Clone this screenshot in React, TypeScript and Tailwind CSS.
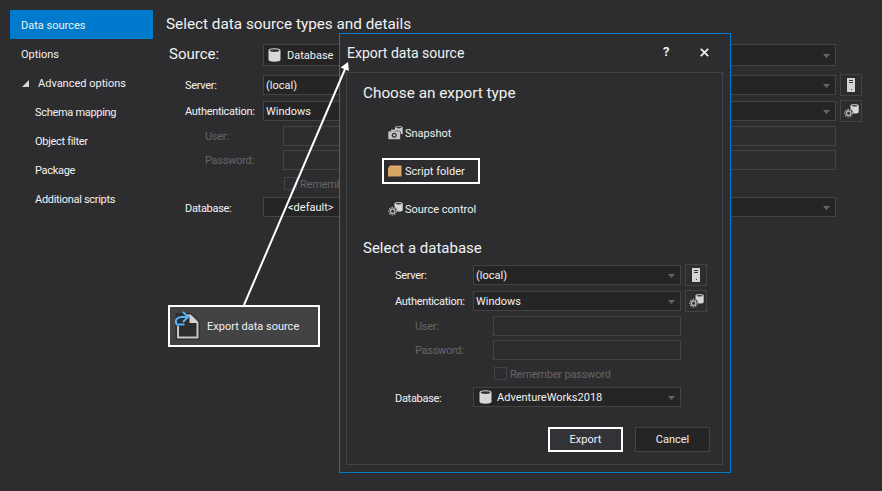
import React from "react";

const DbIcon = ({ className = "" }: { className?: string }) => (
  <svg width="13" height="14" viewBox="0 0 13 14" className={className}>
    <path d="M0.5 2.5C0.5 1 3 0.3 6.5 0.3S12.5 1 12.5 2.5V11.5C12.5 13 10 13.7 6.5 13.7S0.5 13 0.5 11.5Z" fill="#d8d8d8" />
    <ellipse cx="6.5" cy="2.6" rx="4.8" ry="1.4" fill="#333336" />
  </svg>
);

const ServerIcon = () => (
  <svg width="8" height="14" viewBox="0 0 8 14">
    <rect width="8" height="14" fill="#d4d4d4" />
    <rect x="2" y="2" width="4" height="1" fill="#333336" />
    <rect x="2" y="4" width="4" height="1" fill="#333336" />
    <rect x="4" y="11" width="1" height="1" fill="#333336" />
  </svg>
);

const DbGearIcon = () => (
  <svg width="15" height="14" viewBox="0 0 15 14">
    <path d="M6.5 1.6C6.5 .7 8 .2 10.6 .2S14.7 .7 14.7 1.6V8C14.7 9 13.2 9.6 10.6 9.6S6.5 9 6.5 8Z" fill="#d8d8d8" />
    <ellipse cx="10.6" cy="1.8" rx="3.1" ry=".8" fill="#333336" />
    <circle cx="4.6" cy="9.2" r="4.7" fill="#333336" />
    <circle cx="4.6" cy="9.2" r="2.2" fill="none" stroke="#b0b0b0" strokeWidth="1.4" />
    <circle cx="4.6" cy="9.2" r="3.8" fill="none" stroke="#b0b0b0" strokeWidth="1.2" strokeDasharray="1.5 1.2" />
  </svg>
);

const CameraIcon = () => (
  <svg width="15" height="14" viewBox="0 0 15 14">
    <path d="M7 1.5C7 .6 8.5 .2 10.8 .2S14.6 .6 14.6 1.5V8H7Z" fill="#d0d0d0" />
    <ellipse cx="10.8" cy="1.6" rx="2.9" ry=".8" fill="#333336" />
    <rect x="0" y="5" width="12.5" height="8.6" rx="1" fill="#c4c4c4" stroke="#2d2d30" strokeWidth=".6" />
    <rect x="3" y="3.6" width="4" height="2" fill="#c4c4c4" />
    <circle cx="6.2" cy="9.2" r="2.5" fill="#333336" />
    <circle cx="6.2" cy="9.2" r="1.2" fill="#c4c4c4" />
  </svg>
);

const FolderIcon = () => (
  <svg width="14" height="12" viewBox="0 0 14 12">
    <path d="M0 2.5H1V1.5L2 .5H13.5V11.5H0Z" fill="#d6a662" />
    <path d="M3 1H13V2H3Z" fill="#e0b475" />
  </svg>
);

const ExportIcon = () => (
  <svg width="28" height="30" viewBox="0 0 28 30">
    <path d="M2.5 2H18L27 11V29H2.5Z" fill="#2d2d30" />
    <path d="M5 15V26.5H24.5V11.5L17.5 4.5H14" fill="none" stroke="#c4c4c4" strokeWidth="2" />
    <path d="M16.5 3.5L25 12H16.5Z" fill="#d4d4d4" />
    <path d="M3.5 13C1.5 8.5 4.5 6 9 6H15" fill="none" stroke="#58b0f5" strokeWidth="2" />
    <path d="M10 1L15 6L10 11" fill="none" stroke="#58b0f5" strokeWidth="2" />
    <path d="M3 13.5H11.5" stroke="#58b0f5" strokeWidth="2" />
  </svg>
);

const Txt = ({ children }: { children: React.ReactNode }) => <span className="pt-[2px]">{children}</span>;

const Combo = ({ children }: { children: React.ReactNode }) => (
  <div className="flex-1 h-full flex items-center bg-[#252526] border border-[#434346] pl-[2px] pr-[5px] text-[#f1f1f1] min-w-0">
    <div className="flex-1 flex items-center min-w-0 whitespace-nowrap">{children}</div>
    <svg width="7" height="4" viewBox="0 0 7 4" className="shrink-0 mt-[1px]">
      <path d="M0 0H7L3.5 4Z" fill="#656568" />
    </svg>
  </div>
);

const SquareBtn = ({ children }: { children: React.ReactNode }) => (
  <button className="w-[22px] h-[22px] ml-[4px] flex items-center justify-center border border-[#434346] bg-[#2d2d30] shrink-0">
    {children}
  </button>
);

const Label = ({ children, muted = false }: { children: React.ReactNode; muted?: boolean }) => (
  <div className={`w-[78px] shrink-0 whitespace-nowrap pt-[1px] tracking-[-0.3px] ${muted ? "text-[#656565]" : "text-[#f1f1f1]"}`}>
    {children}
  </div>
);

const ComboRow = ({ label, value, icon }: { label: string; value: string; icon: React.ReactNode }) => (
  <div className="flex items-center h-[22px]">
    <Label>{label}</Label>
    <div className="flex-1 h-[20px] flex">
      <Combo><Txt>{value}</Txt></Combo>
    </div>
    <SquareBtn>{icon}</SquareBtn>
  </div>
);

const DisabledRow = ({ label }: { label: string }) => (
  <div className="flex items-center h-[20px] pl-[20px] pr-[26px]">
    <Label muted>{label}</Label>
    <div className="flex-1 h-full border border-[#434346]" />
  </div>
);

const Remember = () => (
  <div className="flex items-center h-[13px] pl-[99px] text-[#656565] whitespace-nowrap tracking-[-0.2px]">
    <span className="w-[13px] h-[13px] border border-[#434346] mr-[3px] shrink-0" />
    <Txt>Remember password</Txt>
  </div>
);

const Fields = ({ db }: { db: React.ReactNode }) => (
  <div className="flex flex-col">
    <ComboRow label="Server:" value="(local)" icon={<ServerIcon />} />
    <div className="mt-[4px]">
      <ComboRow label="Authentication:" value="Windows" icon={<DbGearIcon />} />
    </div>
    <div className="mt-[4px]"><DisabledRow label="User:" /></div>
    <div className="mt-[4px]"><DisabledRow label="Password:" /></div>
    <div className="mt-[7px]"><Remember /></div>
    <div className="mt-[7px] flex items-center h-[20px] pr-[26px]">
      <div className="w-[78px] shrink-0 pt-[3px] tracking-[-0.3px] text-[#f1f1f1]">Database:</div>
      <div className="flex-1 h-full flex">
        <Combo>{db}</Combo>
      </div>
    </div>
  </div>
);

const Nav = ({ children, active }: { children: React.ReactNode; active?: boolean }) => (
  <div className={`h-[29px] pl-[11px] pt-[2px] flex items-center text-[#f1f1f1] whitespace-nowrap ${active ? "bg-[#007acc]" : ""}`}>
    {children}
  </div>
);

const SubNav = ({ children }: { children: React.ReactNode }) => (
  <div className="h-[29px] pl-[25px] pt-[2px] flex items-center text-[#f1f1f1] whitespace-nowrap tracking-[-0.3px]">
    {children}
  </div>
);

const Option = ({ icon, label, selected }: { icon: React.ReactNode; label: string; selected?: boolean }) => (
  <div className={`w-[98px] h-[26px] flex items-center pl-[4px] border-2 whitespace-nowrap text-[#f1f1f1] ${selected ? "border-white" : "border-transparent"}`}>
    <span className="w-[17px] flex items-center shrink-0">{icon}</span>
    <Txt>{label}</Txt>
  </div>
);

export default function App() {
  return (
    <div className="relative w-[882px] h-[491px] overflow-hidden bg-[#2d2d30] text-[11px] leading-[16px] font-[family-name:Roboto,sans-serif] flex">
      <nav className="w-[153px] pl-[10px] pt-[10px] shrink-0">
        <Nav active>Data sources</Nav>
        <Nav>Options</Nav>
        <Nav>
          <svg width="7" height="7" viewBox="0 0 7 7" className="mr-[9px] ml-[1px]">
            <path d="M7 0V7H0Z" fill="#d8d8d8" />
          </svg>
          Advanced options
        </Nav>
        <SubNav>Schema mapping</SubNav>
        <SubNav>Object filter</SubNav>
        <SubNav>Package</SubNav>
        <SubNav>Additional scripts</SubNav>
      </nav>

      <main className="flex-1 pr-[20px] pt-[15px]">
        <h1 className="pl-[13px] h-[19px] text-[15.3px] leading-[19px] text-[#f1f1f1] font-normal whitespace-nowrap">
          Select data source types and details
        </h1>
        <div className="mt-[10px] flex items-center h-[22px] pl-[16px] pr-[26px]">
          <div className="w-[94px] shrink-0 pb-[2px] text-[15px] text-[#f1f1f1]">Source:</div>
          <div className="flex-1 h-full flex">
            <Combo>
              <DbIcon className="ml-[2px] mr-[6px]" />
              <Txt>Database</Txt>
            </Combo>
          </div>
        </div>
        <div className="mt-[8px] pl-[32px]">
          <Fields db={<span className="pl-[22px] pt-[2px]">&lt;default&gt;</span>} />
        </div>
      </main>

      <section className="absolute left-[339px] top-[33px] w-[392px] h-[440px] border border-[#007acc] bg-[#2d2d30] flex flex-col">
        <header className="h-[38px] shrink-0 flex items-center pl-[7px] text-[14px] text-[#f1f1f1] relative">
          Export data source
          <span className="absolute left-[323px] top-[10px] text-[13px] font-bold leading-[16px]">?</span>
          <svg width="9" height="9" viewBox="0 0 9 9" className="absolute left-[360px] top-[14px]">
            <path d="M.8 .8L8.2 8.2M8.2 .8L.8 8.2" stroke="#f1f1f1" strokeWidth="1.7" />
          </svg>
        </header>
        <div className="ml-[6px] mr-[7px] mb-[7px] flex-1 border border-[#434346] pl-[16px] pt-[9px]">
          <h2 className="h-[22px] text-[15.3px] leading-[22px] font-normal text-[#f1f1f1]">Choose an export type</h2>
          <div className="mt-[16px] ml-[19px] flex flex-col gap-[12px]">
            <Option icon={<CameraIcon />} label="Snapshot" />
            <Option icon={<FolderIcon />} label="Script folder" selected />
            <Option icon={<DbGearIcon />} label="Source control" />
          </div>
          <h2 className="mt-[15px] h-[22px] text-[15px] leading-[22px] font-normal text-[#f1f1f1]">Select a database</h2>
          <div className="mt-[5px] ml-[32px] w-[312px]">
            <Fields
              db={
                <>
                  <DbIcon className="ml-[3px] mr-[5px]" />
                  <Txt>AdventureWorks2018</Txt>
                </>
              }
            />
          </div>
          <div className="mt-[20px] ml-[185px] flex gap-[12px]">
            <button className="w-[75px] h-[25px] pt-[1px] border-2 border-white bg-[#333337] text-[#f1f1f1]">Export</button>
            <button className="w-[75px] h-[25px] pt-[1px] border border-[#434346] bg-[#252526] text-[#f1f1f1]">Cancel</button>
          </div>
        </div>
      </section>

      <div className="absolute left-[168px] top-[305px] w-[152px] h-[42px] border-2 border-white bg-[#434346] flex items-center pl-[3px] text-[#f1f1f1] whitespace-nowrap">
        <span className="w-[34px] shrink-0 flex items-center"><ExportIcon /></span>
        <Txt>Export data source</Txt>
      </div>

      <svg width="882" height="491" viewBox="0 0 882 491" className="absolute left-0 top-0 pointer-events-none">
        <path d="M244 305L345.5 68" stroke="#fff" strokeWidth="2" />
        <path d="M348 62L340.5 67.5L349 71Z" fill="#fff" />
      </svg>
    </div>
  );
}
